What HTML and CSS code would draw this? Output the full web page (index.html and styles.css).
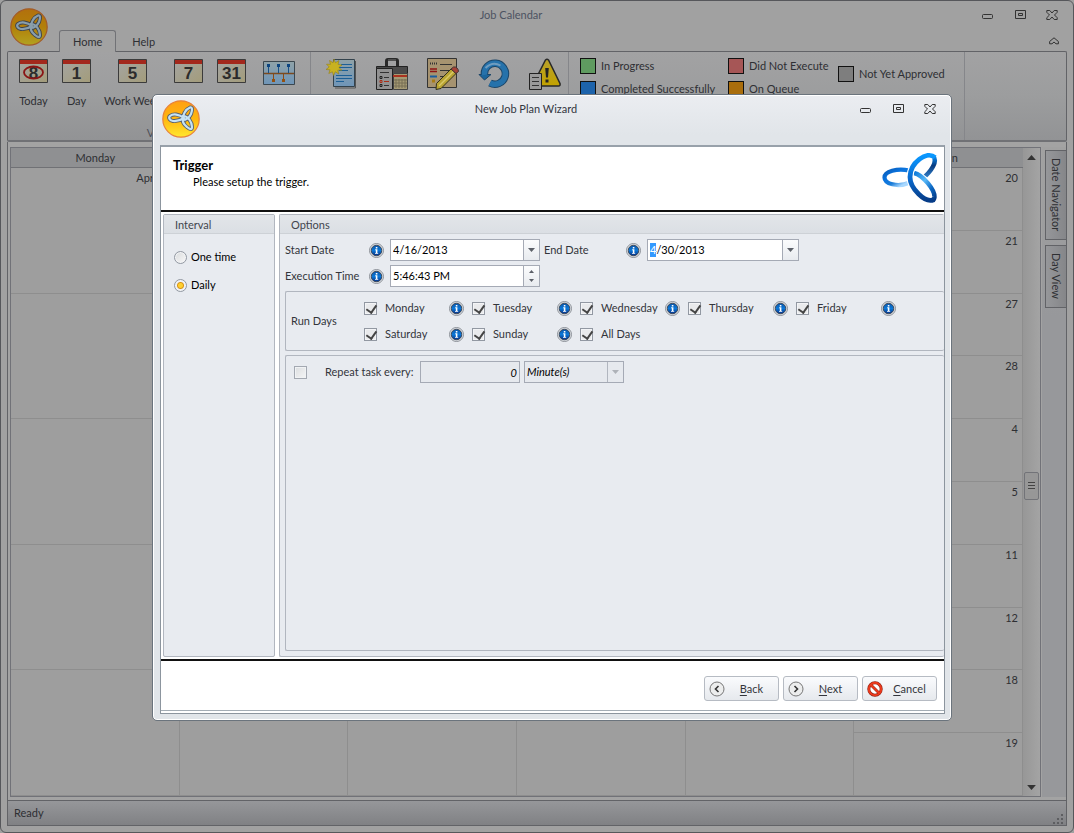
FILE: index.html
```html
<!DOCTYPE html>
<html lang="en">
<head>
<meta charset="utf-8">
<title>Job Calendar</title>
<link rel="stylesheet" href="styles.css">
</head>
<body>
<svg class="defs" aria-hidden="true">
  <defs>
    <linearGradient id="gold" x1="0" y1="0" x2="0" y2="1"><stop offset="0" stop-color="#ffa012"/><stop offset=".5" stop-color="#ffb60e"/><stop offset="1" stop-color="#ffe82e"/></linearGradient>
    <linearGradient id="ib" x1="0" y1="0" x2="0" y2="1"><stop offset="0" stop-color="#0a54a8"/><stop offset=".5" stop-color="#0b78d8"/><stop offset="1" stop-color="#062f86"/></linearGradient>
    <linearGradient id="b1" x1="0" y1="0" x2="1" y2="1"><stop offset="0" stop-color="#0a5cb8"/><stop offset=".35" stop-color="#0a74e0"/><stop offset=".6" stop-color="#1a7cd8"/><stop offset=".85" stop-color="#a8d8ff"/></linearGradient>
    <linearGradient id="b2" x1="0" y1="0" x2="0" y2="1"><stop offset="0" stop-color="#0a98ff"/><stop offset=".5" stop-color="#0a6cd0"/><stop offset="1" stop-color="#063c88"/></linearGradient>
    <linearGradient id="b3" x1="0" y1="0" x2="1" y2="1"><stop offset="0" stop-color="#0b78d8"/><stop offset=".4" stop-color="#58b8f8"/><stop offset=".7" stop-color="#0b68c4"/><stop offset="1" stop-color="#063a84"/></linearGradient>
    <linearGradient id="b4" x1="0" y1="0" x2="0" y2="1"><stop offset="0" stop-color="#0a90f8"/><stop offset=".4" stop-color="#083c80"/><stop offset="1" stop-color="#3a8cd8"/></linearGradient>
    <linearGradient id="page" x1="0" y1="0" x2="1" y2="1"><stop offset="0" stop-color="#a5a5a3"/><stop offset="1" stop-color="#a39c7a"/></linearGradient>
    <linearGradient id="pageblue" x1="0" y1="0" x2="0" y2="1"><stop offset="0" stop-color="#8fa2a8"/><stop offset="1" stop-color="#6f95b8"/></linearGradient>
    <linearGradient id="yel" x1="0" y1="0" x2="0" y2="1"><stop offset="0" stop-color="#b8a12a"/><stop offset="1" stop-color="#c2a200"/></linearGradient>
    <symbol id="orb" viewBox="0 0 38 38">
      <circle cx="19" cy="19" r="18.2" fill="url(#gold)" stroke="#e8823a" stroke-width="1.2"/>
      <g fill="none" stroke="#57606e" stroke-width="4">
        <path id="l1" d="M22 18C17 14 11 13.500 8 16C6 18 8 20.500 11 21C15 21.500 19 20 22 18Z"/>
        <path id="l2" d="M21 20C20 15 24 9 28 7.500C30.500 7 30.500 10 29 14C27 18 24 20 21 20Z"/>
        <path id="l3" d="M21 16C26 16 30 22 30 27C30 30 28 29.500 25 27C21 24 20 20 21 16Z"/>
      </g>
      <g fill="none" stroke="#c4e2f4" stroke-width="2.200"><use href="#l1"/><use href="#l2"/><use href="#l3"/></g>
    </symbol>
    <symbol id="info" viewBox="0 0 15 15">
      <circle cx="7.500" cy="7.500" r="7" fill="#e9ebee" stroke="#8a8f96"/>
      <circle cx="7.500" cy="7.500" r="5.300" fill="url(#ib)" stroke="#3c4654"/>
      <path d="M6.800 4h1.600v1.400H6.800zM6.200 6.300h2.200v3.600h.8v.9H6v-.9h.8V7.200h-.6z" fill="#fff"/>
    </symbol>
    <symbol id="cal" viewBox="0 0 29 24">
      <path d="M.5.5h28v23H.5z" fill="url(#page)" stroke="#3b3b3b"/><path d="M1 1h27v4H1z" fill="#a3281c"/>
    </symbol>
    <symbol id="min" viewBox="0 0 12 12"><rect x=".5" y="5.500" width="10" height="4" rx="1" fill="none" stroke="currentColor"/></symbol>
    <symbol id="max" viewBox="0 0 12 12"><path d="M1.500 1.500h10v8h-10zM4.500 4.500h4v2h-4z" fill="none" stroke="currentColor"/></symbol>
    <symbol id="close" viewBox="0 0 12 12"><path d="M.8 1.500h3L6 4l2.200-2.500h3v1.800L8.500 6l2.700 2.700v1.800h-3L6 8l-2.200 2.500h-3V8.700L3.500 6 .8 3.300z" fill="none" stroke="currentColor"/></symbol>
    <symbol id="down" viewBox="0 0 7 4"><path d="M0 0h7L3.500 4z" fill="currentColor"/></symbol>
    <symbol id="up" viewBox="0 0 7 4"><path d="M0 4h7L3.500 0z" fill="currentColor"/></symbol>
  </defs>
</svg>

<div class="app">
  <header class="titlebar">
    <svg class="orb dim"><use href="#orb"/></svg>
    <h1 class="title app-title">Job Calendar</h1>
    <div class="controls">
      <button aria-label="Minimize"><svg><use href="#min"/></svg></button>
      <button aria-label="Maximize"><svg><use href="#max"/></svg></button>
      <button aria-label="Close"><svg><use href="#close"/></svg></button>
    </div>
    <nav class="tabs">
      <button class="tab active">Home</button>
      <button class="tab">Help</button>
    </nav>
    <button class="collapse" aria-label="Collapse ribbon"><svg viewBox="0 0 10 8"><path d="M.6 4.500L5 .8l4.400 3.700v2.300H7L5 5 3 6.800H.6z" fill="none" stroke="currentColor"/></svg></button>
  </header>

  <section class="ribbon">
    <div class="group views">
      <div class="tools">
        <button class="tool"><svg viewBox="0 0 29 24"><use href="#cal"/><text x="14.500" y="19.500" class="num">8</text><ellipse cx="14.500" cy="13.500" rx="9.500" ry="6" fill="none" stroke="#8a1414" stroke-width="1.800"/></svg>Today</button>
        <button class="tool"><svg viewBox="0 0 29 24"><use href="#cal"/><text x="14.500" y="19.500" class="num">1</text></svg>Day</button>
        <button class="tool wide"><svg viewBox="0 0 29 24"><use href="#cal"/><text x="14.500" y="19.500" class="num">5</text></svg>Work Week</button>
        <button class="tool"><svg viewBox="0 0 29 24"><use href="#cal"/><text x="14.500" y="19.500" class="num">7</text></svg>Week</button>
        <button class="tool"><svg viewBox="0 0 29 24"><use href="#cal"/><text x="14.500" y="19.500" class="num">31</text></svg>Month</button>
        <button class="tool timeline"><svg class="tl" viewBox="0 0 32 24"><path d="M.5.5h31v23H.5z" fill="url(#pageblue)" stroke="#3b474f"/><path d="M1 12.500h30" stroke="#7b4a20" stroke-width="1.500"/><path d="M5.500 6v6M15.500 6v6M25.500 6v6" stroke="#174f86"/><path d="M4 3h3v3H4zM14 3h3v3h-3zM24 3h3v3h-3z" fill="#0d4580"/><path d="M10.500 13v5M20.500 13v5" stroke="#8c4b15"/><path d="M9 18h3v3H9zM19 18h3v3h-3z" fill="#94500f"/></svg>Timeline</button>
      </div>
      <span class="caption">View</span>
    </div>
    <div class="group jobs">
      <button class="job" aria-label="New job plan"><svg viewBox="0 0 32 32"><path d="M8.500 1.500h21v27h-21z" fill="url(#pageblue)" stroke="#33424c"/><path d="M30.500 3v27H10" fill="none" stroke="#555"/><path d="M16 6.500h11M14 9.500h13M14 12.500h9M11 17.500h16M11 20.500h16M11 23.500h8" stroke="#1c5f96"/><path d="M9 1l1.400 3.700L14 2.500 13 6.400l4 .6-3.200 2.400 3 2.800-4-.1 1 3.900-3.500-2.200L8.500 17.500 7.400 13.800 3.800 15.500 5 11.800l-4-.3L4.200 9 1.500 6.200l4 .1-1-3.800L8 4.700z" fill="#c8b220" stroke="#948018" stroke-width=".6"/></svg></button>
      <button class="job" aria-label="Job list"><svg viewBox="0 0 32 32"><path d="M10.500 8V3q0-1.500 1.500-1.500h8q1.500 0 1.500 1.500v5" fill="none" stroke="#292929" stroke-width="3"/><path d="M12 2h8" stroke="#777"/><path d="M.5 8.500h31v9H.5z" fill="#4a4a4a" stroke="#222"/><path d="M17.500 15.500h14v16h-14z" fill="#a59a74" stroke="#444"/><path d="M17 18h14" stroke="#a93320" stroke-width="2"/><path d="M20 21v9M23 21v9M26 21v9M29 21v9M18 22h13M18 25h13M18 28h13" stroke="#776f54"/><path d="M.5 10.500h16v21H.5z" fill="#929292" stroke="#222"/><path d="M4 14.500h9M8 19.500h5M8 27.500h5" stroke="#333"/><path d="M8 23.500h5" stroke="#ab2e18"/><path d="M4 18.500h2v2H4zM4 26.500h2v2H4z" fill="none" stroke="#222"/><path d="M4 22.500h2v2H4z" fill="none" stroke="#ab2e18"/></svg></button>
      <button class="job" aria-label="Edit job"><svg viewBox="0 0 32 32"><path d="M.5.500h29v29H.5z" fill="#a69370" stroke="#333"/><path d="M3 5.500h8" stroke="#333" stroke-dasharray="1 1" stroke-width="2"/><path d="M13 6.500h12M13 12.500h9M13 18.500h6" stroke="#333"/><path d="M3 11h7M3 13.500h7" stroke="#8f1414" stroke-width="1.600"/><path d="M3 18.500h7" stroke="#185da0" stroke-width="2"/><path d="M5 21.500h3v3H5z" fill="#a87c14"/><path d="M9.500 25.500L24 11l5 4.500L14 30.500l-5 1z" fill="#b9a432" stroke="#33311e"/><path d="M12 28L26.500 13.500" stroke="#d9c968" stroke-width="1.500"/><path d="M24 11l2.500-2q2-.5 3.500 1t1.500 3.500l-2.500 2z" fill="#a54338" stroke="#433"/></svg></button>
      <button class="job" aria-label="Refresh"><svg viewBox="0 0 32 32"><path d="M6.500 17A10.500 10.500 0 1 1 12 25" fill="none" stroke="#1d4668" stroke-width="7.500"/><path d="M1 16.500h12L6.500 22z" fill="#1b659c" stroke="#1d4668"/><path d="M6.500 17A10.500 10.500 0 1 1 12 25" fill="none" stroke="#2672ab" stroke-width="5.500"/><path d="M7.500 10q7-7 15-2.500" fill="none" stroke="#6f9cbf" stroke-width="2"/></svg></button>
      <button class="job" aria-label="Alerts"><svg viewBox="0 0 32 32"><path d="M16.500 2q1.500-1.500 3 0l11.500 23.500q.5 2.500-1.500 2.500H6q-2 0-1.500-2.500z" fill="url(#yel)" stroke="#292929" stroke-width="1.500"/><path d="M16.200 10h3.600L19 19.500h-2zM16.500 21.500h3v3h-3z" fill="#242424"/><path d="M.5 15.500h12v16H.5z" fill="#9a9a9a" stroke="#222"/><path d="M3 19.500h7M3 23.500h7M3 27.500h7" stroke="#333"/></svg></button>
    </div>
    <div class="group legend">
      <ul>
        <li><i class="sw green"></i>In Progress</li>
        <li><i class="sw blue"></i>Completed Successfully</li>
      </ul>
      <ul>
        <li><i class="sw red"></i>Did Not Execute</li>
        <li><i class="sw orange"></i>On Queue</li>
      </ul>
      <ul class="single">
        <li><i class="sw gray"></i>Not Yet Approved</li>
      </ul>
    </div>
  </section>

  <main class="workspace">
    <div class="calendar">
      <table>
        <thead><tr><th>Monday</th><th>Tuesday</th><th>Wednesday</th><th>Thursday</th><th>Friday</th><th>Sat/Sun</th></tr></thead>
        <tbody>
          <tr><td rowspan="2">April 15</td><td rowspan="2"></td><td rowspan="2"></td><td rowspan="2"></td><td rowspan="2"></td><td>20</td></tr><tr><td>21</td></tr>
          <tr><td rowspan="2"></td><td rowspan="2"></td><td rowspan="2"></td><td rowspan="2"></td><td rowspan="2"></td><td>27</td></tr><tr><td>28</td></tr>
          <tr><td rowspan="2"></td><td rowspan="2"></td><td rowspan="2"></td><td rowspan="2"></td><td rowspan="2"></td><td>4</td></tr><tr><td>5</td></tr>
          <tr><td rowspan="2"></td><td rowspan="2"></td><td rowspan="2"></td><td rowspan="2"></td><td rowspan="2"></td><td>11</td></tr><tr><td>12</td></tr>
          <tr><td rowspan="2"></td><td rowspan="2"></td><td rowspan="2"></td><td rowspan="2"></td><td rowspan="2"></td><td>18</td></tr><tr><td>19</td></tr>
        </tbody>
      </table>
      <div class="scroll">
        <svg class="arrow"><use href="#up"/></svg>
        <div class="thumb"></div>
        <svg class="arrow"><use href="#down"/></svg>
      </div>
    </div>
    <nav class="side">
      <button>Date Navigator</button>
      <button>Day View</button>
    </nav>
  </main>

  <footer class="status"><span>Ready</span>
    <svg class="grip" viewBox="0 0 11 11"><path d="M8 0h2v2H8zM4 4h2v2H4zM8 4h2v2H8zM0 8h2v2H0zM4 8h2v2H4zM8 8h2v2H8z" fill="#5d5e61"/></svg>
  </footer>
</div>

<div class="dialog" role="dialog" aria-labelledby="dlg-title">
  <header class="titlebar">
    <svg class="orb"><use href="#orb"/></svg>
    <h2 class="title" id="dlg-title">New Job Plan Wizard</h2>
    <div class="controls">
      <button aria-label="Minimize"><svg><use href="#min"/></svg></button>
      <button aria-label="Maximize"><svg><use href="#max"/></svg></button>
      <button aria-label="Close"><svg><use href="#close"/></svg></button>
    </div>
  </header>
  <form class="wizard">
    <div class="intro">
      <div><h3>Trigger</h3><p>Please setup the trigger.</p></div>
      <svg class="brand" viewBox="0 0 56 52">
        <g fill="none">
          <path d="M51 4C56 9 50 19 39 28" stroke="url(#b4)" stroke-width="4.500"/>
          <path d="M32 21C41 23 53 38 52.500 45C52 49 50 49 48 48" stroke="#fff" stroke-width="6.500"/>
          <path d="M32 21C41 23 53 38 52.500 45C52 49 50 49 48 48" stroke="url(#b3)" stroke-width="4.500"/>
          <path d="M27 18.500C15 16 2.500 19.500 2.500 25.500C2.500 31.500 15 36 28 30.500" stroke="url(#b1)" stroke-width="4.200"/>
          <path d="M52 4.500C44 -1 28 11 28 25C28 36 43 52 51 48" stroke="#fff" stroke-width="7"/>
          <path d="M53 5.500C45 -2 28 11 28 25C28 36 43 52 52 47.500" stroke="url(#b2)" stroke-width="4.800"/>
        </g>
      </svg>
    </div>
    <div class="panels">
      <fieldset class="panel interval">
        <legend>Interval</legend>
        <label><input type="radio" name="interval">One time</label>
        <label><input type="radio" name="interval" checked>Daily</label>
      </fieldset>
      <fieldset class="panel options">
        <legend>Options</legend>
        <div class="fields">
          <label for="start">Start Date</label><svg class="info"><use href="#info"/></svg>
          <span class="combo"><input id="start" type="text" value="4/16/2013"><button type="button" aria-label="Open start date"><svg><use href="#down"/></svg></button></span>
          <label for="end" class="second">End Date</label><svg class="info"><use href="#info"/></svg>
          <span class="combo"><input id="end" type="text" value="4/30/2013"><button type="button" aria-label="Open end date"><svg><use href="#down"/></svg></button></span>
          <label for="time">Execution Time</label><svg class="info"><use href="#info"/></svg>
          <span class="combo"><input id="time" type="text" value="5:46:43 PM"><button type="button" class="spin" aria-label="Change time"><svg><use href="#up"/></svg><svg><use href="#down"/></svg></button></span>
        </div>
        <div class="box rundays">
          <span>Run Days</span>
          <div class="days">
            <div class="day"><label><input type="checkbox" checked>Monday</label><svg class="info"><use href="#info"/></svg></div>
            <div class="day"><label><input type="checkbox" checked>Tuesday</label><svg class="info"><use href="#info"/></svg></div>
            <div class="day"><label><input type="checkbox" checked>Wednesday</label><svg class="info"><use href="#info"/></svg></div>
            <div class="day"><label><input type="checkbox" checked>Thursday</label><svg class="info"><use href="#info"/></svg></div>
            <div class="day"><label><input type="checkbox" checked>Friday</label><svg class="info"><use href="#info"/></svg></div>
            <div class="day"><label><input type="checkbox" checked>Saturday</label><svg class="info"><use href="#info"/></svg></div>
            <div class="day"><label><input type="checkbox" checked>Sunday</label><svg class="info"><use href="#info"/></svg></div>
            <div class="day"><label><input type="checkbox" checked>All Days</label></div>
          </div>
        </div>
        <div class="box repeat">
          <label class="rep"><input type="checkbox" class="off">Repeat task every:</label>
          <input class="amount" type="text" value="0" disabled aria-label="Amount">
          <span class="unit"><select disabled aria-label="Unit"><option>Minute(s)</option></select><span class="drop"><svg><use href="#down"/></svg></span></span>
        </div>
      </fieldset>
    </div>
    <div class="actions">
      <button type="button"><svg viewBox="0 0 16 16"><circle cx="8" cy="8" r="7" fill="#eceded" stroke="#777"/><path d="M9.500 5L6.500 8l3 3" fill="none" stroke="#333" stroke-width="1.600"/></svg><span><u>B</u>ack</span></button>
      <button type="button"><svg viewBox="0 0 16 16"><circle cx="8" cy="8" r="7" fill="#eceded" stroke="#777"/><path d="M6.500 5l3 3-3 3" fill="none" stroke="#333" stroke-width="1.600"/></svg><span><u>N</u>ext</span></button>
      <button type="button"><svg viewBox="0 0 16 16"><circle cx="8" cy="8" r="6.200" fill="#fff" stroke="#8d2417" stroke-width="3"/><path d="M4 4l8 8" stroke="#8d2417" stroke-width="2.600"/><circle cx="8" cy="8" r="6.200" fill="none" stroke="#ec3a1c" stroke-width="2"/><path d="M3.500 3.500l9 9" stroke="#ec3a1c" stroke-width="1.800"/></svg><span><u>C</u>ancel</span></button>
    </div>
  </form>
</div>
<script src="app.js"></script>
</body>
</html>
```
FILE: styles.css
```css
* { box-sizing: border-box; }
body { margin: 0; background: #a0a0a0; font: 11px/14px Lato, "Open Sans", sans-serif; color: #2e2f33; }
button { font: inherit; color: inherit; background: none; border: 0; padding: 0; }
h1, h2, h3, p, ul { margin: 0; padding: 0; font: inherit; list-style: none; }
svg { display: block; flex: none; }
.defs { position: absolute; width: 0; height: 0; }

.app { min-height: 100vh; display: flex; flex-direction: column; padding: 0 7px 6px; border: 1px solid #56575b; border-radius: 6px; background: #a1a1a1; }
.titlebar { display: grid; grid-template-columns: 51px 1fr 103px; grid-template-rows: 28px 23px; }
.app .titlebar { margin-bottom: -1px; }
.orb { width: 38px; height: 38px; grid-row: 1 / 3; align-self: center; margin-left: 2px; }
.dim { filter: brightness(.7); }
.title { text-align: center; align-self: center; }
.app-title { color: #4c5361; }
.controls { display: flex; gap: 20px; justify-content: flex-end; align-items: center; padding-right: 8px; color: #333; }
.controls svg { width: 12px; height: 12px; }
.tabs { display: flex; align-items: flex-end; z-index: 1; }
.tab { padding: 0 13px; height: 22px; border: 1px solid transparent; border-bottom: 0; }
.tab.active { margin-right: 2px; border-color: #717276; border-radius: 3px 3px 0 0; background: #a2a2a2; }
.collapse { justify-self: end; margin-right: 7px; color: #333; }
.collapse svg { width: 10px; height: 8px; }

.ribbon { display: flex; height: 91px; border: 1px solid #626367; border-bottom: 2px solid #707175; border-radius: 2px; background: linear-gradient(#a2a2a3, #9c9d9e 50%, #929395); margin: 0 -1px; }
.group { border-right: 1px solid #85868a; padding: 7px 0 0; }
.views { width: 303px; display: flex; flex-direction: column; justify-content: space-between; }
.tools { display: flex; padding-left: 4px; }
.tool { width: 43px; display: flex; flex-direction: column; align-items: center; gap: 11px; white-space: nowrap; }
.tool svg { width: 29px; height: 24px; }
.tool.wide { width: 69px; }
.tool svg.tl { width: 32px; margin: 2px 0 -2px; }
.timeline { width: 51px; }
.num { font: bold 17px "Liberation Sans", sans-serif; fill: #2c2c2c; text-anchor: middle; }
.caption { text-align: center; color: #4c4f58; }
.jobs { width: 258px; display: flex; gap: 19px; padding: 6px 0 0 14px; align-items: flex-start; }
.job svg { width: 32px; height: 32px; }
.legend { flex: 0 0 396px; display: flex; padding: 6px 0 0 11px; }
.legend ul { display: flex; flex-direction: column; gap: 7px; width: 148px; }
.legend ul + ul { width: 110px; }
.legend .single { padding-top: 8px; white-space: nowrap; }
.legend li { display: flex; align-items: center; gap: 5px; height: 16px; }
.sw { width: 16px; height: 16px; border: 1px solid #111; }
.green { background: #5f9b60; }
.blue { background: #1d63ab; }
.red { background: #a65656; }
.orange { background: #a96d0c; }
.gray { background: #7e7e7e; }

.workspace { flex: 1; display: flex; gap: 1px; margin: 0 -1px; padding: 5px 0 3px 2px; border: solid #626367; border-width: 0 1px; background: #a3a3a3; }
.calendar { flex: 1; display: grid; grid-template-columns: 1fr 17px; border: 1px solid #717278; background: #9e9e9e; }
table { width: 100%; height: 100%; border-collapse: separate; border-spacing: 0; table-layout: fixed; }
th { height: 20px; padding: 0; font-weight: normal; background: #8f9092; border-bottom: 1px solid #707175; }
td { height: 62px; padding: 3px 4px 0; text-align: right; vertical-align: top; border: solid #8e8e8e; border-width: 0 1px 1px 0; }
.scroll { display: flex; flex-direction: column; align-items: center; padding: 7px 0 6px; background: linear-gradient(90deg, #979797, #a4a4a4); color: #333; }
.arrow { width: 9px; height: 5px; }
.thumb { width: 15px; height: 28px; margin: 312px 0 auto; border: 1px solid #727378; border-radius: 2px; background: repeating-linear-gradient(#444 0 1px, #999 1px 3px) center / 7px 9px no-repeat, #979797; }
.side { width: 24px; padding: 3px 0 0 3px; display: flex; flex-direction: column; gap: 5px; background: linear-gradient(#a1a1a1 0, #97989b 170px); }
.side button { writing-mode: vertical-rl; width: 21px; padding: 7px 3px 8px; border: 1px solid #626367; border-right: 0; background: linear-gradient(90deg, #96979a, #858689); text-align: left; }
.status { height: 26px; margin: 0 -1px; padding: 0 2px 0 6px; display: flex; align-items: center; justify-content: space-between; border: 1px solid #626367; background: linear-gradient(#96979a, #808184); }
.grip { width: 11px; height: 11px; align-self: flex-end; }

.dialog { position: absolute; inset: 94px 122px 112px 152px; display: flex; flex-direction: column; padding: 0 6px 5px; border: 1px solid #6b747d; border-radius: 5px; background: linear-gradient(#ebedf1, #e1e5e9 40px); box-shadow: inset 0 0 0 1px #fff; }
.dialog .titlebar { grid-template-rows: 28px 22px; }
.dialog .title { color: #33363f; }
.dialog .controls { padding-right: 9px; }
.dialog .orb { align-self: start; margin: 5px 0 0 3px; }
.wizard { flex: 1; min-height: 0; display: flex; flex-direction: column; border: 1px solid #8c959e; border-top: 2px solid #98a1aa; background: #fff; margin: 0 0 1px 1px; padding-bottom: 2px; }
.intro { display: flex; justify-content: space-between; height: 65px; padding: 5px 6px 0 12px; border-bottom: 2px solid #111; color: #000; }
.intro h3 { font-size: 13px; font-weight: bold; line-height: 16px; margin-top: 5px; }
.intro p { margin: 2px 0 0 20px; }
.brand { width: 56px; height: 52px; }
.panels { flex: 1; min-height: 0; display: flex; gap: 4px; padding: 2px 0 2px 2px; }
.panel { display: flex; flex-direction: column; margin: 0; padding: 0; min-width: 0; border: 1px solid #b1b6bf; border-radius: 2px; background: #e8ebf0; }
.panel legend { float: left; width: 100%; height: 19px; padding: 3px 11px 1px; border-bottom: 1px solid #cdd1d6; background: linear-gradient(#e2e5e9, #dbdfe4); color: #41454d; }
.interval { width: 112px; }
.interval label { display: flex; align-items: center; gap: 4px; height: 28px; padding-left: 10px; color: #000; }
.interval legend + label { margin-top: 9px; }
.options { flex: 1; border-right: 0; color: #33353b; }
input, select { font: inherit; margin: 0; }
input[type=radio], input[type=checkbox] { appearance: none; flex: none; width: 13px; height: 13px; border: 1px solid #9298a2; background: linear-gradient(135deg, #d9dbdd, #f8f8f8); box-shadow: inset 0 0 0 1px #f3f4f6; }
input[type=radio] { border-radius: 50%; }
input[type=radio]:checked { background: radial-gradient(circle, #ffd02e 0 2px, #d99416 3px, #eef0f2 4px); }
input[type=checkbox]:checked { background: #e9eaec; display: grid; }
input[type=checkbox]:checked::before { content: ""; width: 5px; height: 8px; margin: 0 0 0 3px; border: solid #444; border-width: 0 2px 2px 0; transform: rotate(35deg); }
.info { width: 15px; height: 15px; }
.fields { display: grid; grid-template-columns: 84px 15px 156px 86px 15px 158px; align-items: center; row-gap: 4px; padding: 5px 0 4px 5px; }
.combo { display: flex; height: 22px; margin-left: 6px; border: 1px solid #a5aab5; background: #fff; }
.second { padding-left: 4px; }
.combo input { flex: 1; min-width: 0; border: 0; outline: 0; padding: 0 2px; color: #000; background: none; }
.combo input::selection { background: #3399ff; color: #fff; }
.combo button { width: 16px; border-left: 1px solid #a5aab5; display: flex; flex-direction: column; align-items: center; justify-content: center; background: linear-gradient(#fbfcfd, #e8ebef); color: #5c6068; }
.combo button svg { width: 7px; height: 4px; }
.combo .spin { gap: 6px; }
.combo .spin svg { width: 5px; height: 3px; }
.box { margin-left: 5px; border: 1px solid #b1b6bf; border-right: 0; border-radius: 2px; }
.rundays { display: flex; align-items: center; height: 60px; padding-left: 5px; }
.rundays > span { width: 73px; }
.days { display: grid; grid-template-columns: repeat(5, 108px); row-gap: 11px; }
.day { display: flex; align-items: center; height: 15px; }
.day label { display: flex; align-items: center; gap: 8px; width: 85px; }
.repeat { flex: 1; display: flex; align-items: flex-start; margin-top: 4px; margin-bottom: 5px; padding: 5px 0 0 8px; }
.rep { display: flex; align-items: center; gap: 18px; width: 126px; height: 22px; white-space: nowrap; }
.rep .off { opacity: .8; }
.amount { width: 100px; height: 22px; padding: 0 2px; border: 1px solid #a5aab5; background: #e6e9ee; text-align: right; font-style: italic; color: #000; }
.unit { position: relative; width: 100px; height: 22px; margin-left: 4px; }
.unit select { appearance: none; width: 100%; height: 22px; padding: 0 2px; border: 1px solid #a5aab5; border-radius: 0; background: #e6e9ee; font-style: italic; color: #000; opacity: 1; }
.drop { position: absolute; top: 1px; right: 1px; width: 16px; height: 20px; border-left: 1px solid #b1b6bf; display: grid; place-items: center; color: #aeb2b8; pointer-events: none; }
.drop svg { width: 7px; height: 4px; }
.actions { display: flex; justify-content: flex-end; gap: 4px; height: 52px; padding: 15px 7px 0; border-top: 2px solid #111; border-bottom: 1px solid #a4adb5; }
.actions button { display: flex; align-items: center; width: 75px; height: 25px; padding-left: 4px; border: 1px solid #b6bbc3; border-radius: 3px; background: linear-gradient(#fafbfd, #e6e9ed); color: #33353b; }
.actions svg { width: 16px; height: 16px; }
.actions span { flex: 1; text-align: center; }
.actions u { text-underline-offset: 2px; }
```
FILE: app.js
```js
const end = document.getElementById("end");
end.focus();
end.setSelectionRange(0, 1);
```
